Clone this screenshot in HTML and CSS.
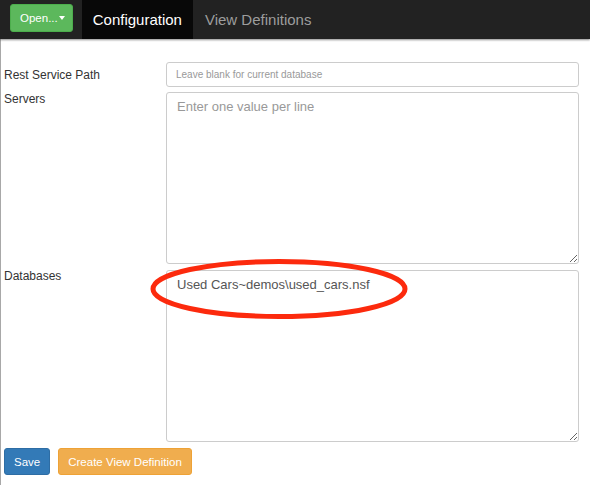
FILE: index.html
```html
<!DOCTYPE html>
<html>
<head>
<meta charset="utf-8">
<link rel="stylesheet" href="styles.css">
</head>
<body>
<nav class="navbar">
  <button class="btn btn-open">Open...<span class="caret"></span></button>
  <a class="tab active">Configuration</a>
  <a class="tab">View Definitions</a>
</nav>
<main class="page">
  <form class="form">
    <label class="lbl lbl-mid">Rest Service Path</label>
    <input class="field field-input" type="text" placeholder="Leave blank for current database">
    <label class="lbl">Servers</label>
    <textarea class="field field-area" placeholder="Enter one value per line"></textarea>
    <label class="lbl">Databases</label>
    <div class="area-wrap">
      <textarea class="field field-area">Used Cars~demos\used_cars.nsf</textarea>
      <svg class="circle" width="262" height="64" viewBox="0 0 262 64"><ellipse cx="130" cy="31" rx="126" ry="27.5" fill="none" stroke="#fc2a0d" stroke-width="5"/></svg>
    </div>
  </form>
  <div class="actions">
    <button class="btn btn-save">Save</button>
    <button class="btn btn-create">Create View Definition</button>
  </div>
</main>
</body>
</html>
```
FILE: styles.css
```css
html, body {
  margin: 0;
  padding: 0;
  background: #fff;
  font-family: "Liberation Sans", Arial, sans-serif;
  color: #333;
}
.navbar {
  height: 39px;
  background: #222;
  display: flex;
  align-items: stretch;
  box-shadow: 0 1px 2px rgba(0,0,0,0.45);
  position: relative;
  z-index: 1;
}
.btn {
  font-family: "Liberation Sans", Arial, sans-serif;
  font-size: 11.5px;
  color: #fff;
  border: 1px solid transparent;
  border-radius: 3px;
  height: 27px;
  padding: 0 9px;
  cursor: pointer;
}
.btn-open {
  background: #5cb85c;
  border-color: #4cae4c;
  height: 28px;
  margin: 4px 9px 0 10px;
  padding: 0 7px 0 9px;
  display: flex;
  align-items: center;
}
.caret {
  display: inline-block;
  margin-left: 1px;
  border-top: 4px solid #fff;
  border-left: 3px solid transparent;
  border-right: 3px solid transparent;
}
.tab {
  display: flex;
  align-items: center;
  padding: 0 12px 1px 12px;
  font-size: 15px;
  color: #9d9d9d;
}
.tab.active {
  background: #080808;
  color: #fff;
  padding: 0 11px 1px 11px;
}
.page {
  border-left: 1px solid #a8a8a8;
  min-height: 446px;
  padding: 23px 11px 0 3px;
  box-sizing: border-box;
}
.form {
  display: grid;
  grid-template-columns: 162px 413px;
  row-gap: 5px;
  margin: 0;
}
.lbl {
  font-size: 12px;
  line-height: 14px;
  color: #333;
}
.lbl-mid {
  align-self: center;
}
.field {
  box-sizing: border-box;
  width: 413px;
  border: 1px solid #ccc;
  border-radius: 3px;
  font-family: "Liberation Sans", Arial, sans-serif;
  color: #555;
  margin: 0;
  outline: none;
}
.field-input {
  height: 25px;
  padding: 0 9px;
  font-size: 10px;
}
.field-input::placeholder {
  color: #999;
}
.field-area {
  display: block;
  height: 172px;
  padding: 5px 10px;
  font-size: 13px;
  line-height: 18px;
  resize: vertical;
}
.field-area::placeholder {
  color: #999;
}
.area-wrap {
  position: relative;
  margin-top: 1px;
}
.circle {
  position: absolute;
  left: -17px;
  top: -12px;
  pointer-events: none;
}
.actions {
  display: flex;
  gap: 8px;
  margin-top: 6px;
}
.btn-save {
  background: #337ab7;
  border-color: #2e6da4;
}
.btn-create {
  background: #f0ad4e;
  border-color: #eea236;
}
```
